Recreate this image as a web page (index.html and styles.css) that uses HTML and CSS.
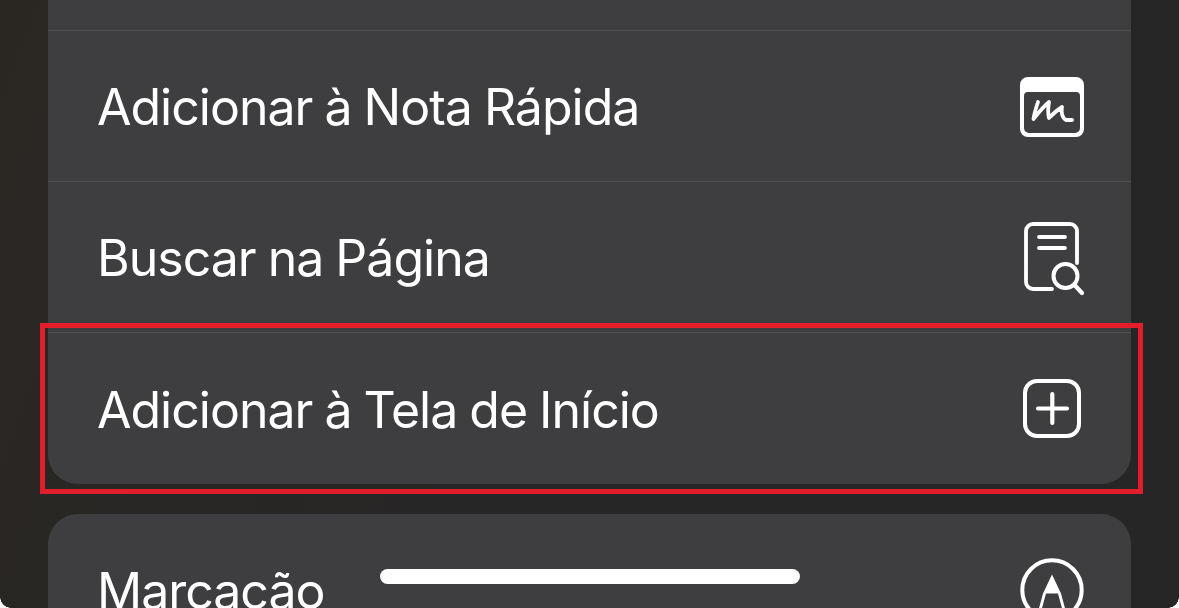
FILE: index.html
```html
<!DOCTYPE html>
<html lang="pt-BR">
<head>
<meta charset="utf-8">
<title>Menu</title>
<link rel="stylesheet" href="styles.css">
</head>
<body>
<main class="sheet">
  <section class="group first">
    <div class="stub"></div>
    <div class="row">
      <span class="label">Adicionar à Nota Rápida</span>
      <svg class="icon icon-note" viewBox="0 0 64 60" width="64" height="60"><path fill="#fff" fill-rule="evenodd" d="M8 0H56a8 8 0 0 1 8 8V52a8 8 0 0 1-8 8H8a8 8 0 0 1-8-8V8a8 8 0 0 1 8-8ZM8 15a4 4 0 0 0-4 4V51a5 5 0 0 0 5 5H55a5 5 0 0 0 5-5V19a4 4 0 0 0-4-4Z"/><path fill="none" stroke="#fff" stroke-width="3.800" stroke-linecap="round" stroke-linejoin="round" d="M18 25C16 31 14 38 13.500 42C19 35 24 29 29 25C28 31 28 37 29 41C33 37 37 33 42 30C41 35 42 41 46 43L52 43"/></svg>
    </div>
    <div class="row">
      <span class="label">Buscar na Página</span>
      <svg class="icon icon-find" viewBox="0 0 60 74" width="60" height="74"><path fill="none" stroke="#fff" stroke-width="3.800" stroke-linecap="round" d="M28 67H9a7 7 0 0 1-7-7V9a7 7 0 0 1 7-7H46a7 7 0 0 1 7 7V41M15 15H41M15 26H41"/><circle cx="41.500" cy="54" r="12" fill="none" stroke="#fff" stroke-width="4"/><path fill="none" stroke="#fff" stroke-width="4.200" stroke-linecap="round" d="M50.500 63L58 71"/></svg>
    </div>
    <div class="row last">
      <span class="label">Adicionar à Tela de Início</span>
      <svg class="icon icon-add" viewBox="0 0 60 60" width="60" height="60"><rect x="2" y="2" width="54" height="55" rx="12" fill="none" stroke="#fff" stroke-width="4"/><path fill="none" stroke="#fff" stroke-width="4.200" stroke-linecap="round" d="M15 29.500H44M29.300 15V44"/></svg>
    </div>
  </section>
  <section class="group">
    <div class="row">
      <span class="label">Marcação</span>
      <svg class="icon" viewBox="0 0 66 66" width="66" height="66"><circle cx="34" cy="33" r="29.700" fill="none" stroke="#fff" stroke-width="4"/><path fill="#fff" d="M34 17.500L43 36.500L51 66H17L25 36.500Z"/><path fill="#3e3e40" d="M28 36.500H40L48 66H20Z"/></svg>
    </div>
  </section>
</main>
<div class="highlight"></div>
<div class="home-indicator"></div>
<div class="corner corner-left"></div>
<div class="corner corner-right"></div>
</body>
</html>
```
FILE: styles.css
```css
* { box-sizing: border-box; }
html, body { margin: 0; height: 100%; }
body {
  position: relative;
  overflow: hidden;
  width: 1179px;
  height: 608px;
  background: linear-gradient(110deg, #2a2723 0%, #272626 45%, #262627 100%);
  font-family: Inter, "Liberation Sans", sans-serif;
  color: #fff;
}
.sheet {
  display: flex;
  flex-direction: column;
  gap: 30px;
  padding: 0 48px;
}
.group {
  background: #3e3e40;
  border-radius: 30px;
}
.group.first { border-radius: 0 0 30px 30px; }
.stub { height: 30px; }
.row {
  display: flex;
  align-items: center;
  justify-content: space-between;
  height: 151px;
  padding: 0 47px 0 50px;
  border-top: 1px solid #505052;
}
.group:not(.first) .row { border-top: 0; }
.row.last { height: 152px; }
.label {
  font-size: 50px;
  font-weight: 400;
  letter-spacing: -1px;
  word-spacing: -1px;
  line-height: 56px;
  margin-left: -1px;
  padding-top: 2px;
  white-space: nowrap;
}
.icon { flex: none; display: block; }
.icon-note { margin-top: 1px; }
.icon-find { margin-top: 4px; }
.icon-add { margin-right: 1px; }
.highlight {
  position: absolute;
  left: 40px;
  top: 323px;
  width: 1103px;
  height: 171px;
  border: 5px solid #e31e2b;
}
.home-indicator {
  position: absolute;
  left: 380px;
  top: 569px;
  width: 420px;
  height: 15px;
  background: #fff;
  border-radius: 8px;
}
.corner {
  position: absolute;
  bottom: 0;
  width: 11px;
  height: 11px;
}
.corner-left { left: 0; background: radial-gradient(circle at 100% 0, transparent 10.500px, #f4f4f4 11px); }
.corner-right { right: 0; background: radial-gradient(circle at 0 0, transparent 10.500px, #fff 11px); }
```
